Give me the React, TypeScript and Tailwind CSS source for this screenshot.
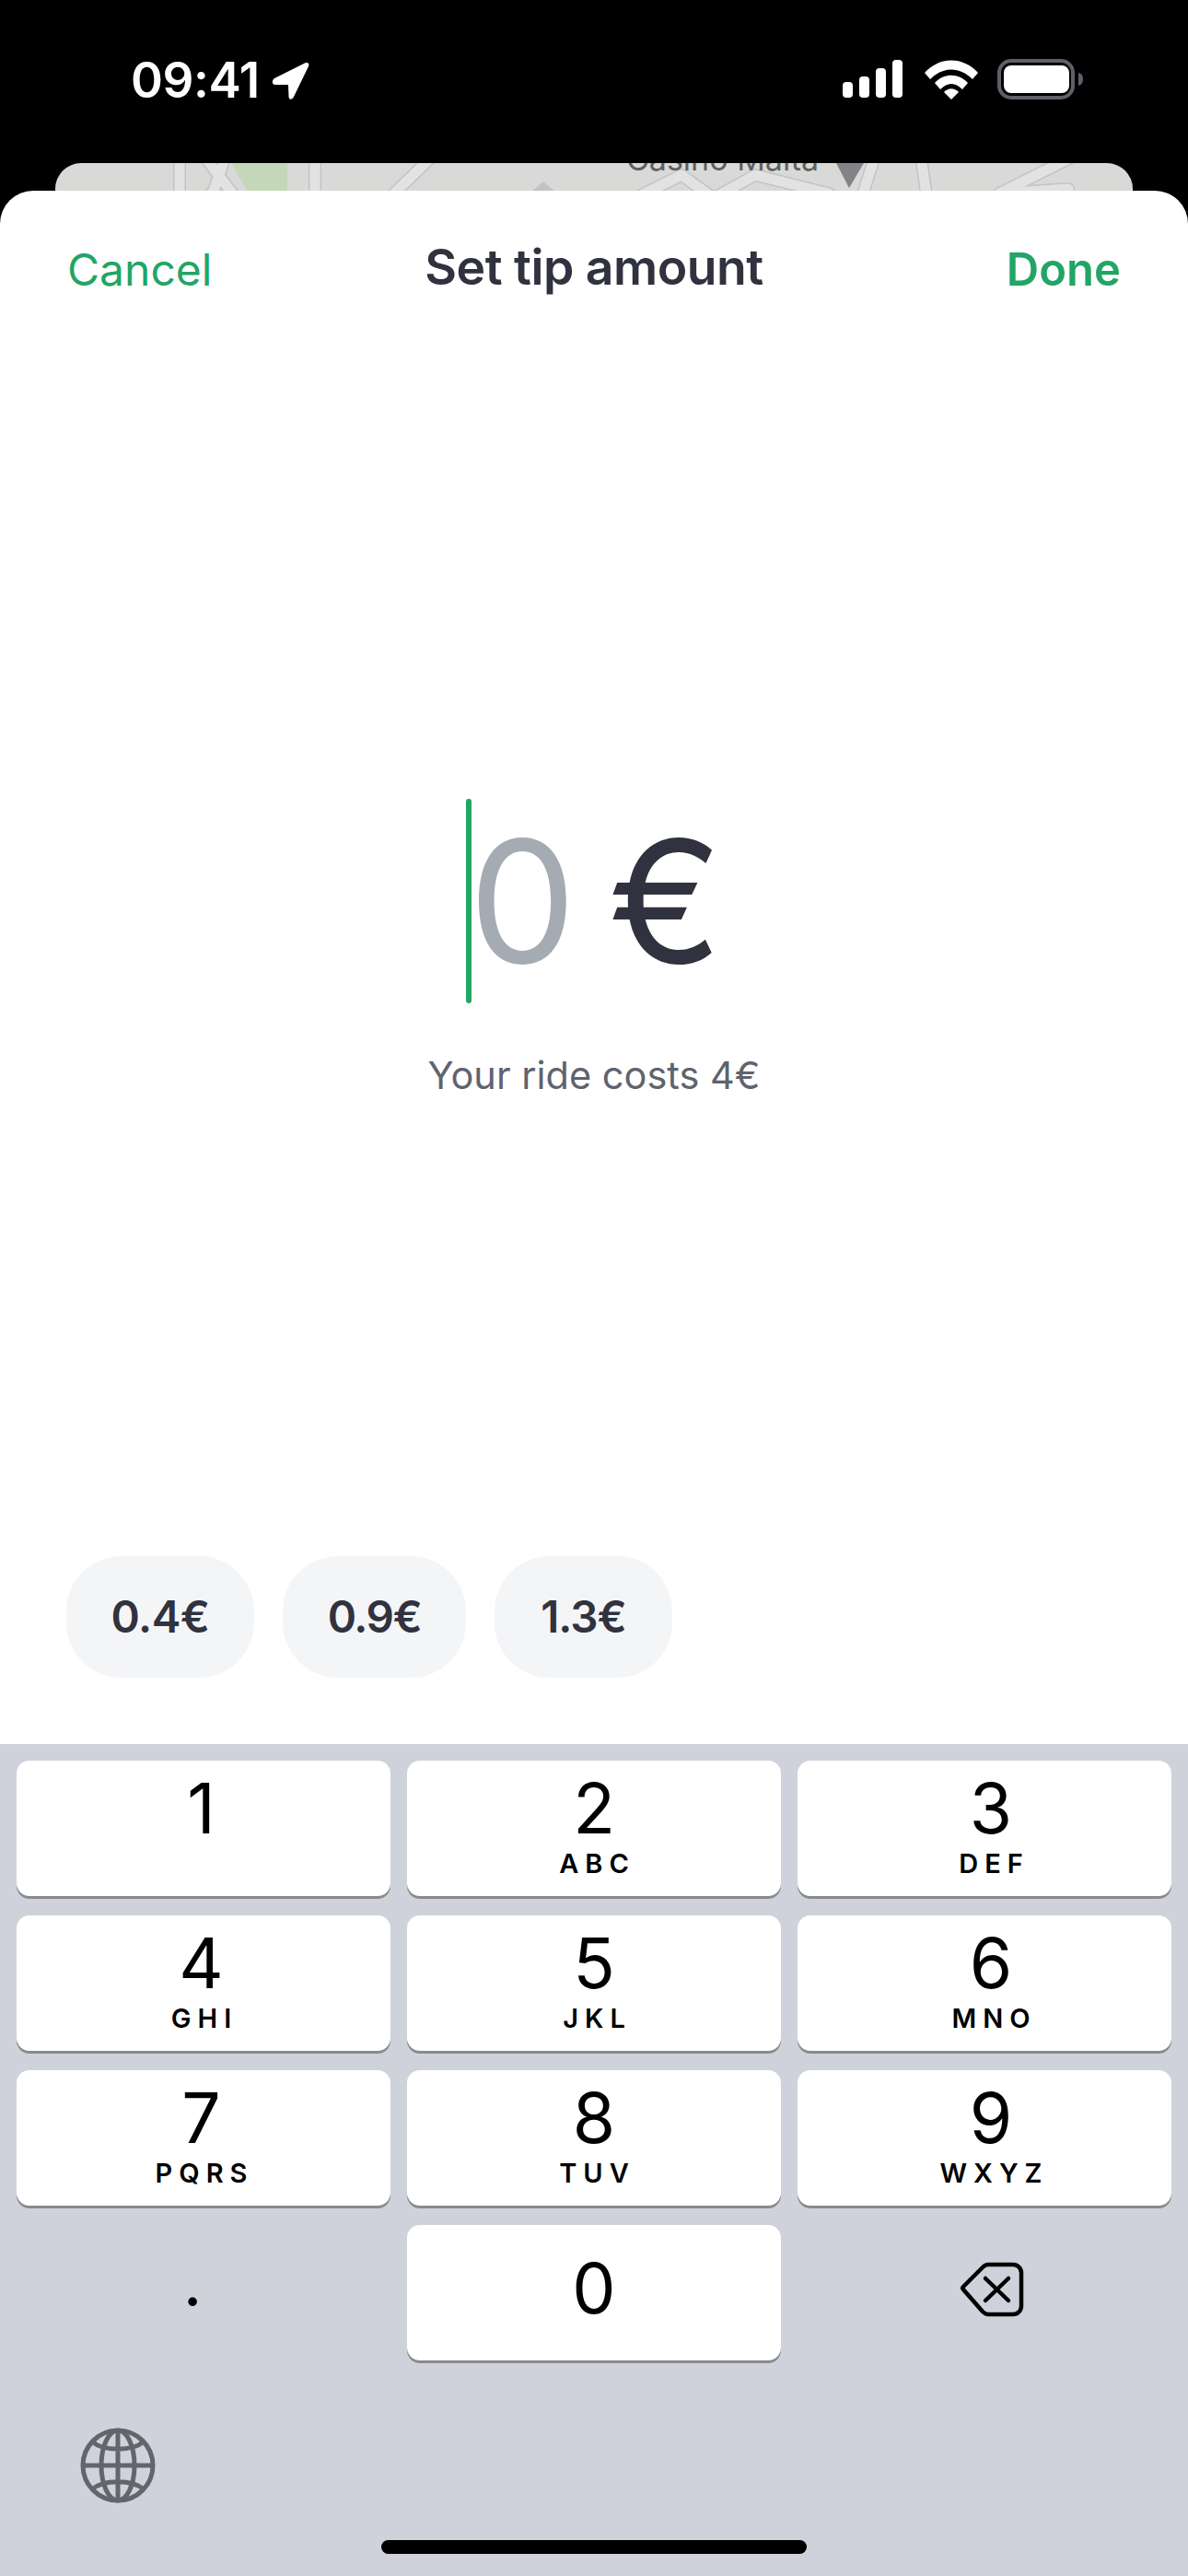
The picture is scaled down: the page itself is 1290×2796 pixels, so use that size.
import React from "react";

const font = { fontFamily: "Inter, 'Noto Sans', sans-serif" };

function MapPreview() {
  return (
    <svg width="1170" height="70" viewBox="60 177 1170 70" className="block">
      <rect x="60" y="177" width="1170" height="70" fill="#d9d9d7" />
      <polygon points="251,177 312,177 312,247 292,247" fill="#c4d7b9" />
      <g fill="none" strokeLinecap="round" strokeLinejoin="round">
        <g stroke="#c2c3c8" strokeWidth="14">
          <path d="M195 170V247M342 170V247M222 170L264 225M245 170L232 207L202 240M469 170L390 247" />
          <path d="M720 247L690 215L740 190L775 215L820 190L900 210L940 247" />
          <path d="M690 215L660 247M775 215L760 247M1165 170L1085 210L1080 247M1085 210L1160 205L1165 247M1000 170L1005 205L1015 247M950 170L925 247" />
          <path d="M1165 225L1230 222" />
        </g>
        <g stroke="#e2e2e1" strokeWidth="11">
          <path d="M195 170V247M342 170V247M222 170L264 225M245 170L232 207L202 240M469 170L390 247" />
          <path d="M720 247L690 215L740 190L775 215L820 190L900 210L940 247" />
          <path d="M690 215L660 247M775 215L760 247M1165 170L1085 210L1080 247M1085 210L1160 205L1165 247M1000 170L1005 205L1015 247M950 170L925 247" />
          <path d="M1165 225L1230 222" />
        </g>
      </g>
      <path d="M578 207L590 197L602 207Z" fill="#c2c3c8" />
      <polygon points="908,177 938,177 922,204" fill="#828388" />
      <text x="680" y="185" fontSize="34" fill="#5e5f63" style={font}>Casino Malta</text>
    </svg>
  );
}

function StatusBar() {
  return (
    <div className="flex h-[177px] items-start justify-between pl-[142px] pr-[113px] pt-[58px] text-white">
      <div className="flex items-center gap-[13px]">
        <span className="text-[53px] font-semibold leading-[58px] tracking-[-0.4px]" style={font}>09:41</span>
        <svg width="42" height="42" viewBox="0 0 42 42" className="mt-[1px]">
          <path d="M3 18L36 1.5C39 0 41.5 2.5 40 5L24 38C22 42 18.5 41 18.5 38L18 25L4 25C0 25 0 20 3 18Z" fill="#fff" />
        </svg>
      </div>
      <div className="flex items-center pt-[6px]">
        <svg width="65" height="42" viewBox="0 0 65 42" className="mr-[24px]" fill="#fff">
          <rect x="0" y="24" width="11" height="17" rx="4" />
          <rect x="18" y="18" width="11" height="23" rx="4" />
          <rect x="36" y="9" width="11" height="32" rx="4" />
          <rect x="54" y="0" width="11" height="41" rx="4" />
        </svg>
        <svg width="58" height="43" viewBox="0 0 58 43" className="mr-[21px]" fill="#fff">
          <path d="M0 14C16 -4 42 -4 58 14L52 21C38 7 20 7 6 21Z" />
          <path d="M11 25C21 14 37 14 47 25L41 32C33 24 25 24 17 32Z" />
          <path d="M21 35C26 30 32 30 37 35L29 43Z" />
        </svg>
        <svg width="94" height="44" viewBox="0 0 94 44">
          <rect x="2" y="2" width="80" height="40" rx="13" fill="none" stroke="#5f6168" strokeWidth="4" />
          <rect x="7" y="7" width="71" height="30" rx="8" fill="#fff" />
          <path d="M88 15C92 16 93 19 93 22C93 25 92 28 88 29Z" fill="#5f6168" />
        </svg>
      </div>
    </div>
  );
}

function Key({ n, l, shift, top }: { n: string; l: string; shift: string; top: string }) {
  return (
    <div className={`flex h-[147px] flex-col items-center rounded-[14px] bg-white text-black shadow-[0_3px_0_#898a8d] ${shift}`}>
      <span className={`${top} text-[75px] font-normal leading-[64px]`}>{n}</span>
      {l ? <span className="mt-[13px] pl-[7px] text-[29px] font-semibold leading-[30px] tracking-[7px]">{l}</span> : null}
    </div>
  );
}

const keys: [string, string, string][] = [
  ["1", "", "pr-[5px]"], ["2", "ABC", ""], ["3", "DEF", "pl-[14px]"],
  ["4", "GHI", "pr-[5px]"], ["5", "JKL", ""], ["6", "MNO", "pl-[14px]"],
  ["7", "PQRS", "pr-[5px]"], ["8", "TUV", ""], ["9", "WXYZ", "pl-[14px]"],
];

const pills: [string, string][] = [
  ["0.4€", "w-[204px] tracking-[-0.5px]"],
  ["0.9€", "w-[199px] tracking-[-1.5px]"],
  ["1.3€", "w-[193px] tracking-[-1px]"],
];

export default function App() {
  return (
    <div className="flex h-[2796px] w-[1290px] flex-col overflow-hidden bg-black" style={font}>
      <StatusBar />
      <div className="mx-[60px] h-[70px] overflow-hidden rounded-t-[28px]">
        <MapPreview />
      </div>
      <div className="relative mt-[-40px] flex h-[1686px] flex-col rounded-t-[36px] bg-white">
        <div className="grid grid-cols-3 items-center px-[73px] pt-[53px]">
          <span className="justify-self-start text-[48px] leading-[60px] text-[#22a565]">Cancel</span>
          <span className="mb-[6px] justify-self-center whitespace-nowrap text-[53.5px] font-semibold leading-[60px] tracking-[-0.5px] text-[#31323f]">Set tip amount</span>
          <span className="justify-self-end text-[49px] font-semibold leading-[60px] text-[#22a565]">Done</span>
        </div>
        <div className="mt-[541px] flex flex-col items-center">
          <div className="flex h-[222px] items-center">
            <div className="h-[222px] w-[6px] rounded-full bg-[#22a565]" />
            <span className="ml-[-3px] text-[185px] font-normal leading-[222px] text-[#a4abb3]">0</span>
            <span className="ml-[35px] text-[185px] font-normal leading-[222px] text-[#31323f]">€</span>
          </div>
          <span className="mt-[48px] text-[41.5px] leading-[60px] text-[#5f636e]">Your ride costs 4€</span>
        </div>
        <div className="mt-auto flex gap-[31px] px-[72px] pb-[72px]">
          {pills.map(([t, c]) => (
            <div key={t} className={`flex h-[132px] items-center justify-center rounded-[60px] bg-[#f4f5f7] text-[47.5px] font-semibold text-[#31323f] ${c}`}>
              {t}
            </div>
          ))}
        </div>
      </div>
      <div className="flex flex-1 flex-col bg-[#cfd2da]">
        <div className="grid grid-cols-3 gap-x-[18px] gap-y-[21px] px-[18px] pt-[18px]">
          {keys.map(([n, l, s]) => (
            <Key key={n} n={n} l={l} shift={s} top="mt-[20px]" />
          ))}
          <div className="flex h-[147px] items-center justify-center pb-[24px] pr-[24px] text-[72px] leading-none text-black">.</div>
          <Key n="0" l="" shift="" top="mt-[37px]" />
          <div className="flex h-[147px] items-center justify-center pb-[8px] pl-[16px]">
            <svg width="70" height="60" viewBox="0 0 70 60" fill="none" stroke="#000" strokeWidth="4.5" strokeLinecap="round" strokeLinejoin="round">
              <path d="M4 30C3 29 3 28 4 27L25 6C27 4 29 3 31 3H58C63 3 67 7 67 12V48C67 53 63 57 58 57H31C29 57 27 56 25 54Z" />
              <path d="M28 18L53 42M53 18L28 42" />
            </svg>
          </div>
        </div>
        <div className="ml-[87px] mt-[73px]">
          <svg width="82" height="82" viewBox="0 0 82 82" fill="none" stroke="#62656b" strokeWidth="5">
            <circle cx="41" cy="41" r="38" />
            <ellipse cx="41" cy="41" rx="18" ry="38" />
            <path d="M41 3V79M3 41H79M13 15C25 26 57 26 69 15M13 67C25 56 57 56 69 67" />
          </svg>
        </div>
        <div className="mx-auto mt-[40px] h-[15px] w-[462px] rounded-full bg-black" />
      </div>
    </div>
  );
}
